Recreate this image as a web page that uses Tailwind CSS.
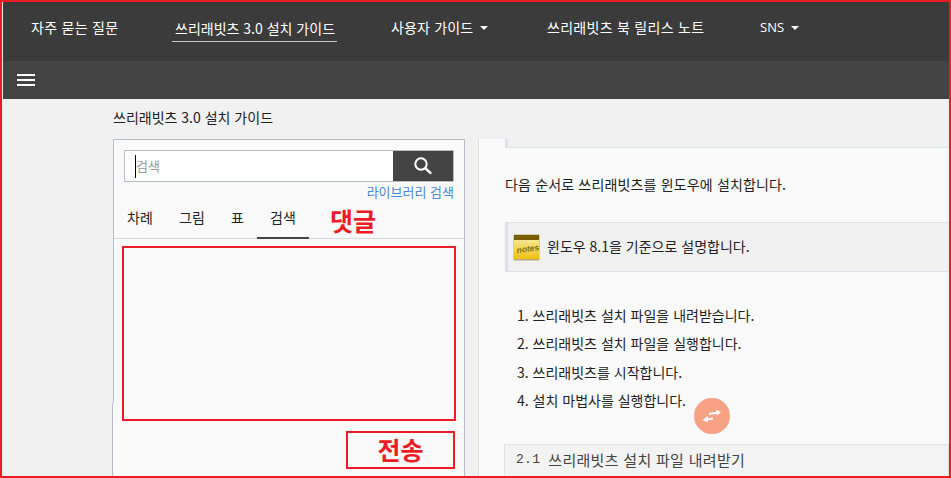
<!DOCTYPE html>
<html lang="ko">
    <head>
        <meta charset="UTF-8">
        <title>쓰리래빗츠 3.0 설치 가이드</title>
        <script src="https://cdn.jsdelivr.net/npm/@tailwindcss/browser@4"></script>
    </head>
    <body class="bg-[#f1f1f1] overflow-hidden font-['Noto_Sans_CJK_KR','Noto_Sans',sans-serif]">
        <div class="relative h-[478px] w-[951px] overflow-hidden border-2 border-[#ed1c24] bg-[#f1f1f1]">
            <!-- top nav -->
            <nav class="ml-px flex h-[59px] items-center bg-[#3b3b3b] pb-2 pl-[28px] text-[14px] text-white">
                <a class="w-[141px] tracking-[0.28px]">자주 묻는 질문</a>
                <a class="mt-px w-[165px] whitespace-nowrap border-b border-[#c8c8c8] px-[3px] pb-[2px] pt-[4px]">쓰리래빗츠 3.0 설치 가이드</a>
                <a class="ml-[54px] flex w-[156px] items-center tracking-[0.15px]">사용자 가이드<span class="ml-[7px] h-0 w-0 border-x-4 border-t-4 border-x-transparent border-t-white"></span></a>
                <a class="w-[213px] tracking-[0.28px]">쓰리래빗츠 북 릴리스 노트</a>
                <a class="flex items-center font-['Open_Sans',sans-serif] text-[13px]">SNS<span class="ml-[7px] h-0 w-0 border-x-4 border-t-4 border-x-transparent border-t-white"></span></a>
            </nav>
            <!-- tool bar -->
            <div class="ml-px flex h-[38px] items-center bg-[#444444] pl-[14px]">
                <div class="flex w-[18px] flex-col gap-[3px]">
                    <span class="h-[2px] bg-white"></span>
                    <span class="h-[2px] bg-white"></span>
                    <span class="h-[2px] bg-white"></span>
                </div>
            </div>
            <main class="pl-[111px]">
                <p class="flex h-[40px] items-center pb-1 text-[14px] text-[#222]">쓰리래빗츠 3.0 설치 가이드</p>
                <div class="flex">
                    <!-- side panel -->
                    <div class="w-[352px] shrink-0">
                        <section class="h-[264px] border-x border-t border-[#b4bec8] bg-[#fafafa] pt-[10px]">
                            <div class="mx-[10px] flex h-[32px] border border-[#b4bec8] bg-white">
                                <div class="flex flex-1 items-center pl-[10px] text-[13px] text-[#9a9a9a]"><span class="h-[23px] w-px bg-black"></span>검색</div>
                                <div class="flex w-[60px] items-center justify-center bg-[#444444]">
                                    <svg width="20" height="20" viewBox="0 0 20 20" fill="none" stroke="white"><circle cx="8" cy="8" r="5.7" stroke-width="2"/><path d="M12 12l6.2 5.7" stroke-width="2.4"/></svg>
                                </div>
                            </div>
                            <p class="mr-[10px] text-right text-[13px] leading-[20px] text-[#4a86d8]">라이브러리 검색</p>
                            <div class="mt-[3px] flex h-[34px] items-start border-b border-[#d8d8d8] text-[14px] leading-[24px] text-[#222]">
                                <a class="ml-[13px] w-[52px]">차례</a>
                                <a class="w-[52px]">그림</a>
                                <a class="w-[26px]">표</a>
                                <a class="relative h-[34px] w-[52px] text-center before:absolute before:bottom-0 before:left-0 before:h-[2px] before:w-full before:bg-[#444444]">검색</a>
                            </div>
                        </section>
                        <section class="-ml-px h-[76px] border-x border-[#b4bec8] bg-[#fafafa]"></section>
                    </div>
                    <!-- content -->
                    <article class="ml-[13px] h-[340px] flex-1 overflow-hidden border-l border-[#dddddd] bg-[#fafafa] text-[14px] text-[#222]">
                        <div class="ml-[26px] h-[9px] border-b border-l-[3px] border-[#dde1ee] bg-[#f1f1f1]"></div>
                        <p class="ml-[26px] mt-[26px] leading-[20px] tracking-[0.16px]">다음 순서로 쓰리래빗츠를 윈도우에 설치합니다.</p>
                        <div class="ml-[26px] mt-[28px] flex h-[50px] items-center border-y border-l-[3px] border-[#dde1ee] bg-[#f1f1f1] pl-[5px]">
                            <svg width="27" height="27" viewBox="0 0 27 27" class="shrink-0">
                                <defs><linearGradient id="noteFill" x1="0" y1="0" x2="0" y2="1"><stop offset="0" stop-color="#f5e892"/><stop offset="1" stop-color="#f0c010"/></linearGradient></defs>
                                <rect x="0.5" y="0.5" width="26" height="26" rx="1" fill="#b8a878"/>
                                <rect x="1" y="1" width="25" height="5" fill="#7a6000"/>
                                <rect x="1" y="6" width="25" height="19" fill="url(#noteFill)"/>
                                <text x="3.5" y="18" font-size="8.5" font-weight="bold" font-style="italic" font-family="Liberation Sans" fill="#85701c" transform="rotate(-8 13 15)">notes</text>
                            </svg>
                            <span class="ml-[7px] pb-[2px]">윈도우 8.1을 기준으로 설명합니다.</span>
                        </div>
                        <ol class="ml-[38px] mt-[29px] leading-[28.4px]">
                            <li>1. 쓰리래빗츠 설치 파일을 내려받습니다.</li>
                            <li>2. 쓰리래빗츠 설치 파일을 실행합니다.</li>
                            <li>3. 쓰리래빗츠를 시작합니다.</li>
                            <li>4. 설치 마법사를 실행합니다.</li>
                        </ol>
                        <h2 class="ml-[25px] mt-[29px] flex h-[40px] items-start border border-[#e0e0e0] bg-[#f3f3f3] pl-[11px] pt-[4px] text-[15px] tracking-[0.3px] text-[#444]"><span class="mr-[8px] font-['Liberation_Mono',monospace] text-[13px] leading-[22px]">2.1</span>쓰리래빗츠 설치 파일 내려받기</h2>
                    </article>
                </div>
            </main>

            <!-- red annotations drawn over the page -->
            <span class="absolute left-[328px] top-[201px] text-[25px] leading-[34px] font-bold text-[#ed1c24]">댓글</span>
            <div class="absolute left-[120px] top-[244px] h-[175px] w-[334px] border-2 border-[#ed1c24]"></div>
            <div class="absolute left-[344px] top-[429px] flex h-[38px] w-[109px] items-center justify-center border-2 border-[#ed1c24] text-[25px] font-bold text-[#ed1c24]">전송</div>

            <!-- floating switch button -->
            <button class="absolute left-[692px] top-[396px] flex h-[36px] w-[36px] items-center justify-center rounded-full bg-[#f7a285]">
                <svg width="20" height="16" viewBox="0 0 20 16" fill="none" stroke="white" stroke-width="2"><path d="M7 6l10-1.5M1.5 12L11 10.5"/><path d="M14 1.5l5 2.5-4 3.5zM6 7.5L1 12l5 2.5z" fill="white" stroke="none"/></svg>
            </button>
        </div>
    </body>
</html>
